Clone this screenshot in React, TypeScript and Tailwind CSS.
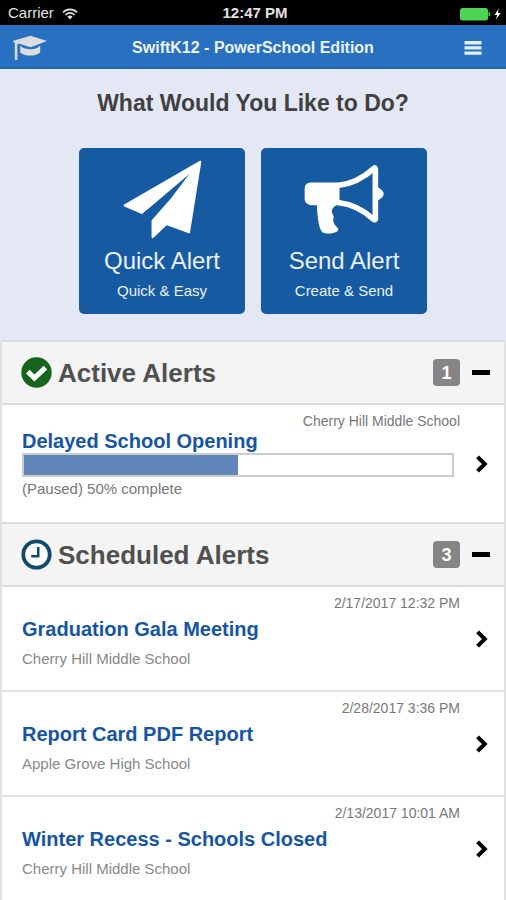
import { useState, type ReactNode } from 'react';

/* ── Data ────────────────────────────────────────────────────────────────── */

const ACTIVE = [
  { title: 'Delayed School Opening', school: 'Cherry Hill Middle School', percent: 50, state: 'Paused' },
];

const SCHEDULED = [
  { title: 'Graduation Gala Meeting', school: 'Cherry Hill Middle School', date: '2/17/2017 12:32 PM' },
  { title: 'Report Card PDF Report', school: 'Apple Grove High School', date: '2/28/2017 3:36 PM' },
  { title: 'Winter Recess - Schools Closed', school: 'Cherry Hill Middle School', date: '2/13/2017 10:01 AM' },
];

/* ── Icons ───────────────────────────────────────────────────────────────── */

const WifiIcon = () => (
  <svg viewBox="0 0 16 12" className="h-3 w-4" fill="none" stroke="#e2e2e2" strokeWidth="1.6" aria-hidden="true">
    <path d="M1 4.4C5 .3 11 .3 15 4.4" />
    <path d="M3.4 7C6.2 4.2 9.8 4.2 12.6 7" />
    <path d="M5.4 8.6C7 7.2 9 7.2 10.6 8.6L8 11.4z" fill="#e2e2e2" stroke="none" />
  </svg>
);

const BatteryIcon = () => (
  <svg viewBox="0 0 42 14" className="h-3.5 w-[42px]" aria-label="Battery charging">
    <rect x="0" y="1" width="28" height="12.5" rx="2.5" fill="#4cd552" />
    <path d="M28.500 5c2.500.6 2.500 4 0 4.600z" fill="#4cd552" />
    <path d="M38.6 1.5 34.6 8h2.6l-1.4 4.6L40.8 6h-2.9z" fill="#fff" />
  </svg>
);

const CapIcon = () => (
  <svg viewBox="0 0 36 26" className="h-[26px] w-9" fill="#dcdedd" aria-hidden="true">
    <path d="M18.500.8 35 6 18.500 12.200 6.600 8.600 5.400 9.200V24.400Q4 25.600 2.800 24.400V8L.6 6z" />
    <path d="M8.200 10.600C10 13 14 14.400 18.500 14.200S26.400 12.800 28.200 10.400V17.400C24.500 21.400 12 21.600 8.200 17.400z" />
  </svg>
);

const MenuIcon = () => (
  <svg viewBox="0 0 18 14" className="h-3.5 w-[18px]" fill="#e6eef8" aria-hidden="true">
    <path d="M.5 0h17v3.400H.5zM.5 5.200h17v3.400H.5zM.5 10.400h17v3.400H.5z" />
  </svg>
);

const PlaneIcon = () => (
  <svg viewBox="150 55 250 250" className="size-[83px]" fill="#fff" stroke="#fff" strokeWidth="6" strokeLinejoin="round" aria-hidden="true">
    <path d="M389 66 161 198 214 221 350 106 245 243V294L287 254 355 279z" />
    <path d="M213 224 238 203 356 103 300 177 241 244z" fill="#165aa2" stroke="none" />
  </svg>
);

const MegaphoneIcon = () => (
  <svg viewBox="145 55 250 250" className="size-[83px]" fill="#fff" aria-hidden="true">
    <path d="M168 129H255V197H245C232 205 229 216 235 225 239 231 237 236 236 241 236 249 240 257 246 262 254 268 253 275 243 279 231 284 214 284 203 279 190 262 188 222 187 197H168Q150 194 150 178V147Q150 131 168 129z" />
    <path d="M250 138C292 133 330 112 359 86Q363 83 363 91V237Q363 244 357 239C328 212 292 194 250 189" fill="none" stroke="#fff" strokeWidth="17" strokeLinejoin="round" />
    <path d="M370 143Q387 151 388 163 387 176 370 183z" />
  </svg>
);

const CheckCircleIcon = () => (
  <svg viewBox="0 0 31 31" className="size-[31px]" aria-hidden="true">
    <circle cx="15.500" cy="15.500" r="15.200" fill="#17641f" />
    <path d="m6.800 14.600 6.600 6.400L24.400 10.600" fill="none" stroke="#fff" strokeWidth="5" />
  </svg>
);

const ClockIcon = () => (
  <svg viewBox="0 0 31 31" className="size-[31px]" fill="none" stroke="#12496f" aria-hidden="true">
    <circle cx="15.500" cy="15.500" r="13.200" fill="#fff" strokeWidth="3.800" />
    <path d="M17.200 8v9.200h-7" strokeWidth="2.600" />
  </svg>
);

const ChevronIcon = () => (
  <svg viewBox="0 0 12 18" className="h-[18px] w-3 shrink-0" fill="none" stroke="#000" strokeWidth="4" aria-hidden="true">
    <path d="m1.600 1.800 7.200 7.200-7.200 7.200" />
  </svg>
);

/* ── Building blocks ─────────────────────────────────────────────────────── */

type ActionProps = { icon: ReactNode; title: string; subtitle: string };

const ActionButton = ({ icon, title, subtitle }: ActionProps) => (
  <button
    type="button"
    className="flex h-[166px] w-[166px] flex-col items-center rounded-[5px] bg-[#165aa2] pt-2.5 text-[#e9f1fb]"
  >
    {icon}
    <span className="mt-1.5 text-2xl leading-7">{title}</span>
    <span className="mt-1.5 text-[15px] leading-5">{subtitle}</span>
  </button>
);

type SectionProps = { icon: ReactNode; title: string; count: number; children: ReactNode };

const Section = ({ icon, title, count, children }: SectionProps) => {
  const [open, setOpen] = useState(true);

  return (
    <section className="border-x-2 border-[#e2e2e2] bg-white">
      <div className="flex h-[65px] items-center border-y-2 border-[#dcdcdc] bg-[#f4f4f4] pr-3.5 pl-[19px]">
        {icon}
        <h2 className="ml-1.5 flex-1 text-[26px] leading-8 font-bold text-[#505050]">{title}</h2>
        <span className="flex h-[27px] w-[27px] items-center justify-center rounded bg-[#858585] text-lg font-bold text-white">
          {count}
        </span>
        <button
          type="button"
          aria-label={`Toggle ${title}`}
          aria-expanded={open}
          onClick={() => setOpen(!open)}
          className="ml-3 flex h-8 w-[18px] items-center"
        >
          <span className="h-[5px] w-full bg-black" />
        </button>
      </div>
      {open && children}
    </section>
  );
};

/* ── Screen ──────────────────────────────────────────────────────────────── */

export default function App() {
  return (
    <div className="overflow-hidden bg-white font-['Liberation_Sans',Arial,sans-serif]">

      {/* Status bar */}
      <div className="grid h-[25px] grid-cols-[1fr_auto_1fr] items-center bg-black pt-0.5 pr-1 pl-2 text-[#e2e2e2]">
        <div className="flex items-center gap-2 text-[15px]">
          Carrier
          <WifiIcon />
        </div>
        <span className="text-[15px] font-bold">12:47 PM</span>
        <div className="flex justify-end">
          <BatteryIcon />
        </div>
      </div>

      {/* App bar */}
      <header className="grid h-11 grid-cols-[1fr_auto_1fr] items-center border-b-2 border-[#2265ae] bg-[#2870c0] px-3 pt-1">
        <a href="#home" aria-label="Home" className="w-9">
          <CapIcon />
        </a>
        <h1 className="text-base font-bold text-[#edf4fd]">SwiftK12 - PowerSchool Edition</h1>
        <button type="button" aria-label="Menu" className="mr-3 justify-self-end">
          <MenuIcon />
        </button>
      </header>

      <main>
        {/* Actions */}
        <div className="bg-[#e4e8f5] pt-[18px] pb-[26px]">
          <h2 className="text-center text-[23px] leading-8 font-bold text-[#404040]">What Would You Like to Do?</h2>
          <div className="mt-[29px] flex justify-center gap-4">
            <ActionButton icon={<PlaneIcon />} title="Quick Alert" subtitle="Quick &amp; Easy" />
            <ActionButton icon={<MegaphoneIcon />} title="Send Alert" subtitle="Create &amp; Send" />
          </div>
        </div>

        <Section icon={<CheckCircleIcon />} title="Active Alerts" count={ACTIVE.length}>
          {ACTIVE.map((alert) => (
            <a key={alert.title} href="#alert" className="flex h-[117px] items-center gap-4 pr-4 pl-5">
              <div className="flex-1 self-start pt-2">
                <p className="text-right text-sm leading-4 text-[#777]">{alert.school}</p>
                <h3 className="my-0.5 text-xl leading-5 font-bold text-[#1655a3]">{alert.title}</h3>
                <div
                  role="progressbar"
                  aria-label={alert.title}
                  aria-valuenow={alert.percent}
                  className="mr-1.5 h-6 border-2 border-[#ccc] bg-white"
                >
                  <div className="h-full bg-[#6086ba]" style={{ width: `${alert.percent}%` }} />
                </div>
                <p className="mt-1 text-[15px] leading-4 text-[#777]">
                  ({alert.state}) {alert.percent}% complete
                </p>
              </div>
              <ChevronIcon />
            </a>
          ))}
        </Section>

        <Section icon={<ClockIcon />} title="Scheduled Alerts" count={SCHEDULED.length}>
          {SCHEDULED.map((alert) => (
            <a
              key={alert.title}
              href="#alert"
              className="flex h-[105px] items-center gap-4 border-b-2 border-[#e2e2e2] pr-4 pl-5"
            >
              <div className="flex-1 self-start pt-2">
                <p className="text-right text-sm leading-4 text-[#777]">{alert.date}</p>
                <h3 className="mt-1.5 text-xl leading-6 font-bold text-[#1655a3]">{alert.title}</h3>
                <p className="mt-2 text-[15px] leading-5 text-[#888]">{alert.school}</p>
              </div>
              <ChevronIcon />
            </a>
          ))}
        </Section>
      </main>
    </div>
  );
}
